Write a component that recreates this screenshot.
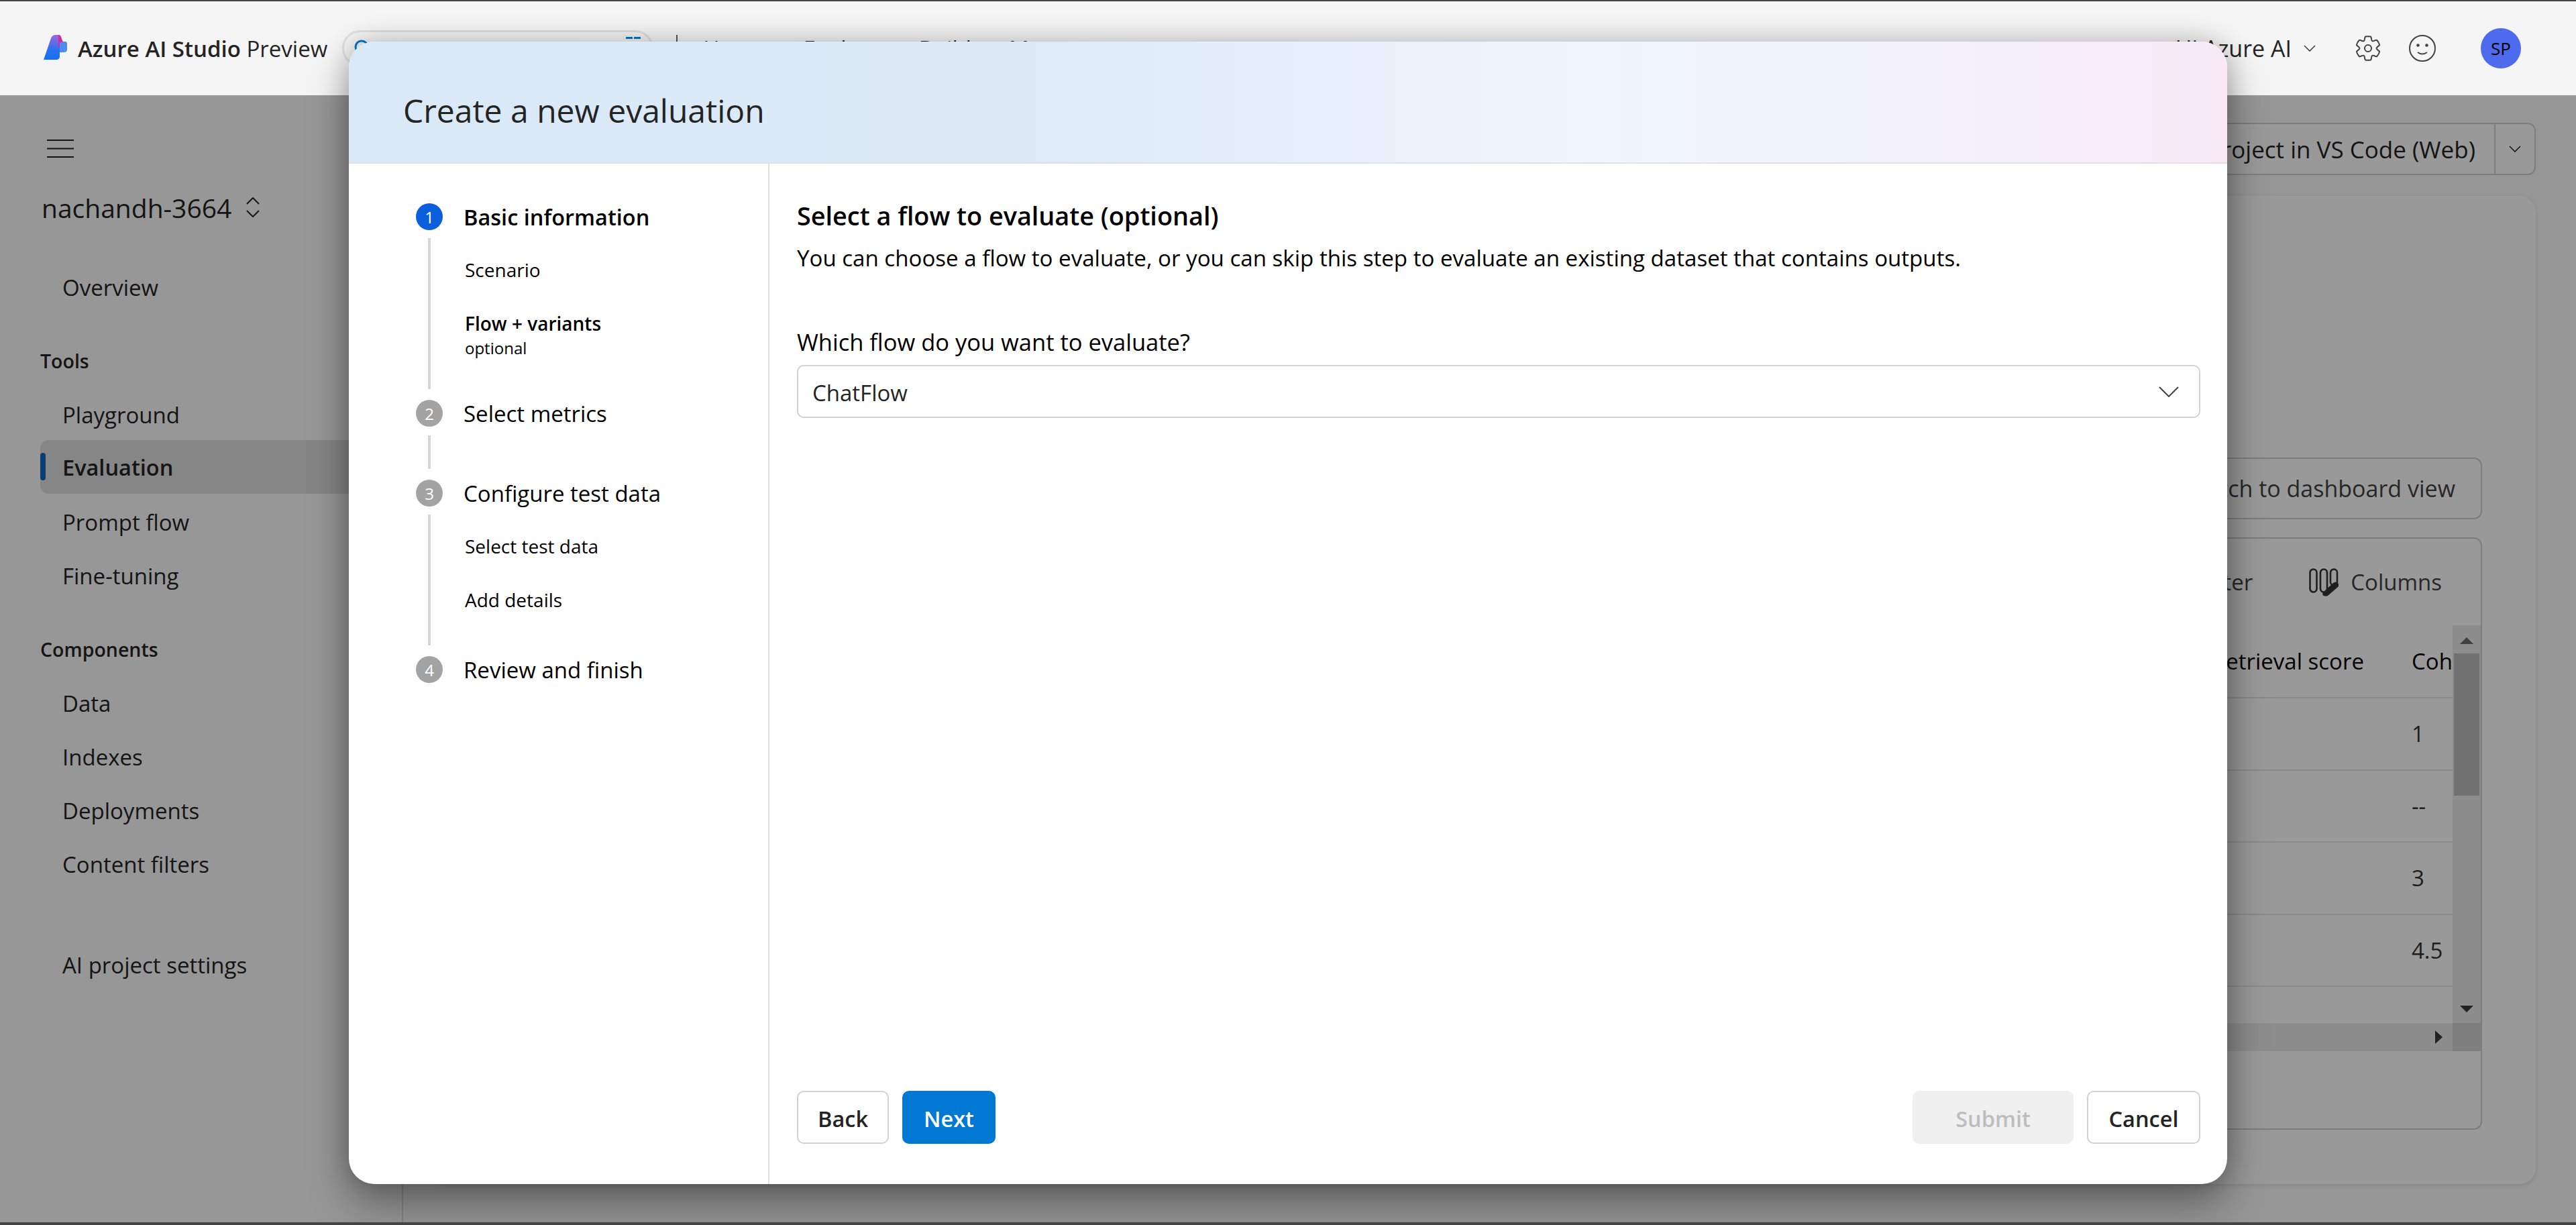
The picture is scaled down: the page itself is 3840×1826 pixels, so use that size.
<div class="page">
  <header class="topbar">
    <svg class="logo" viewBox="0 0 35 38" width="35" height="38">
      <defs><linearGradient id="lg" x1="0" y1="0" x2="0" y2="1"><stop offset="0" stop-color="#9a6ad8"/><stop offset=".6" stop-color="#2a70ee"/><stop offset="1" stop-color="#1470f5"/></linearGradient></defs>
      <path d="M24 10h8q3 0 3 3v9q0 4-5 4h-6z" fill="#4d8df2"/>
      <path d="M0 37 11 5q2-5 7-5h6v33q-1 4-5 4z" fill="url(#lg)"/>
      <path d="M22 0q3 0 4 3l3 8h-5v7h-2z" fill="#d42a9f"/>
    </svg>
    <div class="brand"><strong>Azure AI Studio</strong> <span>Preview</span></div>
    <div class="search">
      <svg width="28" height="28" viewBox="0 0 28 28"><circle cx="14" cy="12" r="9" fill="none" stroke="#0078d4" stroke-width="3"/></svg>
      <svg class="kbd" width="22" height="4" viewBox="0 0 22 4"><rect width="10" height="3" fill="#0078d4"/><rect x="12" width="10" height="3" fill="#0078d4"/></svg>
    </div>
    <div class="vline"></div>
    <nav class="toplinks"><span>Home</span><span>Explore</span><span>Build</span><span>Manage</span></nav>
    <div class="right">
      <span class="hi">Hi Azure AI</span>
      <svg class="chev" width="18" height="10" viewBox="0 0 18 10"><path d="M1 1l8 8 8-8" fill="none" stroke="#424242" stroke-width="1.6"/></svg>
      <svg class="gear" width="42" height="42" viewBox="0 0 20 20"><path d="M1.91 7.38A8.5 8.5 0 0 1 3.7 4.3a.5.5 0 0 1 .54-.13l1.92.68a1 1 0 0 0 1.32-.76l.36-2a.5.5 0 0 1 .4-.4 8.53 8.53 0 0 1 3.55 0c.2.04.35.2.38.4l.37 2a1 1 0 0 0 1.32.76l1.92-.68a.5.5 0 0 1 .54.13 8.5 8.5 0 0 1 1.78 3.08c.06.2 0 .4-.15.54l-1.56 1.32a1 1 0 0 0 0 1.52l1.56 1.32a.5.5 0 0 1 .15.54 8.5 8.5 0 0 1-1.78 3.08.5.5 0 0 1-.54.13l-1.92-.68a1 1 0 0 0-1.32.76l-.37 2a.5.5 0 0 1-.38.4 8.53 8.53 0 0 1-3.56 0 .5.5 0 0 1-.39-.4l-.36-2a1 1 0 0 0-1.32-.76l-1.92.68a.5.5 0 0 1-.54-.13 8.5 8.5 0 0 1-1.78-3.08.5.5 0 0 1 .15-.54l1.56-1.32a1 1 0 0 0 0-1.52L2.06 7.92a.5.5 0 0 1-.15-.54Z" fill="none" stroke="#424242" stroke-width=".95"/><circle cx="10" cy="10" r="2.4" fill="none" stroke="#424242" stroke-width=".95"/></svg>
      <svg class="smile" width="40" height="40" viewBox="0 0 40 40"><circle cx="20" cy="20" r="19" fill="none" stroke="#424242" stroke-width="2"/><circle cx="13.5" cy="15.5" r="2.3" fill="#424242"/><circle cx="26.5" cy="15.5" r="2.3" fill="#424242"/><path d="M13 26q7 5 14 0" fill="none" stroke="#424242" stroke-width="2"/></svg>
      <div class="avatar">SP</div>
    </div>
  </header>

  <div class="body">
    <aside class="side">
      <svg class="burger" width="40" height="27" viewBox="0 0 40 27"><path d="M0 1h40M0 13.500h40M0 26h40" stroke="#242424" stroke-width="2"/></svg>
      <div class="project">nachandh-3664
        <svg width="22" height="30" viewBox="0 0 22 30"><path d="M2 10l9-9 9 9M2 20l9 9 9-9" fill="none" stroke="#242424" stroke-width="2"/></svg>
      </div>
      <div class="item first">Overview</div>
      <div class="group">Tools</div>
      <div class="item gfirst">Playground</div>
      <div class="item active">Evaluation</div>
      <div class="item">Prompt flow</div>
      <div class="item">Fine-tuning</div>
      <div class="group g2">Components</div>
      <div class="item gfirst">Data</div>
      <div class="item">Indexes</div>
      <div class="item">Deployments</div>
      <div class="item">Content filters</div>
      <div class="item settings">AI project settings</div>
    </aside>
    <main class="main">
      <div class="actions">
        <div class="split"><span class="split-main">Open project in VS Code (Web)</span>
          <span class="split-arrow"><svg width="18" height="10" viewBox="0 0 18 10"><path d="M1 1l8 8 8-8" fill="none" stroke="#242424" stroke-width="1.6"/></svg></span>
        </div>
      </div>
      <section class="card">
        <div class="switchrow"><div class="switch">Switch to dashboard view</div></div>
        <div class="tablecard">
          <div class="toolbar">
            <span>Filter</span>
            <span class="colbtn">
              <svg width="44" height="42" viewBox="0 0 44 42"><g fill="none" stroke="#333" stroke-width="2.600"><rect x="1.500" y="1.500" width="10" height="34" rx="5"/><rect x="17" y="1.500" width="10" height="34" rx="5"/><rect x="32" y="1.500" width="10" height="24" rx="5"/></g><path d="M21 36 36 22q4-3 7 0t0 6L28 41q-3 1-6 0t-1-5z" fill="#333"/></svg>
              Columns
            </span>
          </div>
          <div class="tablewrap">
            <div class="table">
              <div class="row head"><span class="c1">Retrieval score</span><span class="c2">Coherence</span></div>
              <div class="row"><span class="c2">1</span></div>
              <div class="row"><span class="c2">--</span></div>
              <div class="row"><span class="c2">3</span></div>
              <div class="row"><span class="c2">4.5</span></div>
            </div>
            <div class="vscroll">
              <svg class="up" width="20" height="10" viewBox="0 0 20 10"><path d="M10 0l10 10H0z" fill="#6a6a6a"/></svg>
              <div class="thumb"></div>
              <svg class="down" width="20" height="10" viewBox="0 0 20 10"><path d="M10 10 20 0H0z" fill="#3a3a3a"/></svg>
            </div>
          </div>
          <div class="hscroll">
            <div class="htrack"><svg width="11" height="20" viewBox="0 0 11 20"><path d="M11 10 0 20V0z" fill="#3a3a3a"/></svg></div>
            <div class="corner"></div>
          </div>
        </div>
      </section>
    </main>
  </div>
  <div class="overlay"></div>

  <div class="modal" role="dialog">
    <div class="mhead">Create a new evaluation</div>
    <div class="mbody">
      <div class="stepper">
        <div class="step on"><span class="num">1</span><span class="lbl">Basic information</span></div>
        <div class="conn c-a">
          <div class="sub">Scenario</div>
          <div class="sub cur">Flow + variants<small>optional</small></div>
        </div>
        <div class="step"><span class="num">2</span><span class="lbl">Select metrics</span></div>
        <div class="conn c-b"></div>
        <div class="step"><span class="num">3</span><span class="lbl">Configure test data</span></div>
        <div class="conn c-c">
          <div class="sub">Select test data</div>
          <div class="sub">Add details</div>
        </div>
        <div class="step"><span class="num">4</span><span class="lbl">Review and finish</span></div>
      </div>
      <div class="pane">
        <h2>Select a flow to evaluate (optional)</h2>
        <p>You can choose a flow to evaluate, or you can skip this step to evaluate an existing dataset that contains outputs.</p>
        <label for="flow">Which flow do you want to evaluate?</label>
        <div class="dd" id="flow"><span class="ddv">ChatFlow</span>
          <svg width="30" height="16" viewBox="0 0 30 16"><path d="M1 1l14 14L29 1" fill="none" stroke="#424242" stroke-width="2"/></svg>
        </div>
        <div class="foot">
          <button class="btn back">Back</button>
          <button class="btn next">Next</button>
          <span class="sp"></span>
          <button class="btn submit">Submit</button>
          <button class="btn cancel">Cancel</button>
        </div>
      </div>
    </div>
  </div>
</div>

<style>
  :global(body){margin:0;background:#fafafa}
  .page{position:relative;width:3840px;height:1826px;overflow:hidden;display:flex;flex-direction:column;border-top:2px solid #444;border-bottom:4px solid #444;box-sizing:border-box;font-family:"Open Sans",sans-serif;font-size:33px;color:#242424}
  .topbar{height:140px;flex:none;background:#f5f5f5;display:flex;align-items:center;padding-left:65px;box-sizing:border-box}
  .logo{flex:none;margin-top:-2px}
  .brand{margin-left:16px;white-space:nowrap}
  .brand strong{font-weight:600}
  .search{width:464px;height:54px;box-sizing:border-box;border:3px solid #e0e0e0;border-radius:27px;margin-left:22px;display:flex;align-items:center;justify-content:space-between;padding:0 16px 0 12px;flex:none}
  .kbd{margin-top:-30px}
  .vline{width:2px;height:40px;background:#555;margin-left:34px}
  .toplinks{display:flex;gap:56px;margin-left:38px}
  .right{margin-left:auto;display:flex;align-items:center;padding-right:82px}
  .hi{white-space:nowrap;font-size:34px}
  .chev{margin-left:18px}
  .gear{margin-left:57px}
  .smile{margin-left:40px}
  .avatar{width:60px;height:60px;border-radius:50%;background:#4f6bed;color:#000;font-size:26px;display:flex;align-items:center;justify-content:center;margin-left:67px}
  .body{flex:1;display:flex;min-height:0;background:#fafafa}
  .side{width:601px;flex:none;box-sizing:border-box;border-right:2px solid #ddd;background:#fcfcfc;padding-left:60px;display:flex;flex-direction:column}
  .burger{margin:66px 0 0 10px}
  .project{margin:50px 0 0 2px;height:48px;display:flex;align-items:center;gap:21px;font-weight:500;font-size:39px}
  .item{height:80px;display:flex;align-items:center;padding-left:33px}
  .item.first{margin-top:55px}
  .group{height:40px;display:flex;align-items:center;font-size:28.5px;font-weight:600;margin-top:50px}
  .item.gfirst{margin-top:20px}
  .group.g2{margin-top:50px}
  .active{font-weight:600;font-size:32.5px;background:#e0e0e0;border-radius:12px;margin-right:21px;position:relative;margin-top:-2px;margin-bottom:2px}
  .active::before{content:"";position:absolute;left:0;top:19px;width:8px;height:41px;border-radius:4px;background:#0f6cbd}
  .settings{margin-top:70px}
  .main{flex:1;min-width:0;padding:41px 60px 57px 40px;display:flex;flex-direction:column;gap:31px}
  .actions{display:flex;justify-content:flex-end}
  .split{height:78px;width:720px;flex:none;box-sizing:border-box;border:2px solid #d1d1d1;border-radius:12px;background:#fff;display:flex;align-items:center;justify-content:flex-end;white-space:nowrap}
  .split-main{padding-right:28px;font-weight:500;font-size:35px}
  .split-arrow{width:58px;height:100%;border-left:2px solid #d1d1d1;display:flex;align-items:center;justify-content:center}
  .card{flex:1;background:#fff;border-radius:24px;padding:390px 80px 81px 40px;display:flex;flex-direction:column;gap:27px;min-height:0;box-shadow:0 2px 6px rgba(0,0,0,.12)}
  .switchrow{display:flex;justify-content:flex-end}
  .switch{height:92px;box-sizing:border-box;border:2px solid #d1d1d1;border-radius:12px;padding:0 38px;display:flex;align-items:center;white-space:nowrap;color:#424242;font-size:34px}
  .tablecard{flex:1;border:2px solid #d1d1d1;border-radius:12px;overflow:hidden;min-height:0}
  .toolbar{height:129px;display:flex;justify-content:flex-end;align-items:center;gap:84px;padding-right:58px;color:#424242}
  .colbtn{display:flex;align-items:center;gap:18px}
  .tablewrap{display:flex;height:593px}
  .table{flex:1;min-width:0;overflow:hidden}
  .row{height:107.5px;border-bottom:2px solid #e6e6e6;display:flex;justify-content:flex-end;align-items:center;white-space:nowrap;gap:71px;color:#333;box-sizing:border-box}
  .row.head{height:109px;color:#000}
  .c2{width:61px;overflow:hidden;flex:none}
  .vscroll{width:42px;flex:none;background:#ebebeb;display:flex;flex-direction:column;align-items:center;position:relative}
  .up{margin-top:18px}
  .thumb{width:38px;height:212px;background:#bdbdbd;margin-top:14px}
  .down{position:absolute;bottom:16px}
  .hscroll{height:42px;display:flex;background:#ebebeb}
  .htrack{flex:1;display:flex;justify-content:flex-end;align-items:center;padding-right:15px}
  .corner{width:42px;background:#d4d4d4}
  .overlay{position:absolute;left:0;right:0;top:140px;bottom:0;background:rgba(0,0,0,.4)}
  .modal{position:absolute;left:520px;top:60px;width:2800px;height:1703px;background:#fff;border-radius:38px;box-shadow:0 32px 64px rgba(0,0,0,.32),0 0 40px rgba(0,0,0,.22);display:flex;flex-direction:column;overflow:hidden}
  .mhead{flex:none;border-bottom:2px solid #e0e0e0;background:linear-gradient(90deg,#d9e9f7 0%,#dceaf8 36%,#f0f6fd 66%,#f4f1fa 86%,#f8e9f5 100%);display:flex;align-items:center;padding:24px 0 0 81px;height:156px;font-size:48px;font-weight:500}
  .mbody{flex:1;display:flex;min-height:0}
  .stepper{width:627px;flex:none;box-sizing:border-box;border-right:2px solid #e0e0e0;padding:59px 0 0 100px;color:#000}
  .step{display:flex;align-items:center;height:40px;gap:31px}
  .num{width:40px;height:40px;flex:none;border-radius:50%;background:#a3a3a3;color:#fff;font-size:24px;display:flex;align-items:center;justify-content:center}
  .on .num{background:#0b5fdd}
  .on .lbl{font-weight:600;font-size:32.5px}
  .conn{margin:12px 0 16px 18px;border-left:4px solid #d6d6d6;padding:7px 0 0 51px;box-sizing:border-box;font-size:28px}
  .c-a{height:225px}
  .c-b{height:50px;margin-top:13px}
  .c-c{height:195px}
  .sub{padding:20px 0;line-height:40px}
  .cur{font-weight:600}
  .cur small{display:block;font-size:24px;line-height:34px;font-weight:400}
  .pane{flex:1;min-width:0;padding:54px 40px 60px 41px;display:flex;flex-direction:column;color:#000}
  h2{margin:0;font-size:37.800px;line-height:48px;font-weight:600}
  p{margin:17px 0 0;line-height:44px;white-space:nowrap;font-size:33.100px}
  label{display:block;margin-top:81px;line-height:44px;font-weight:500;font-size:34.500px}
  .dd{margin-top:12px;height:79px;box-sizing:border-box;border:2px solid #d1d1d1;border-radius:10px;display:flex;align-items:center;justify-content:space-between;padding:0 30px 0 21px;color:#242424;font-size:33px}
  .ddv{margin-top:3px}
  .foot{margin-top:auto;display:flex;gap:20px}
  .sp{flex:1}
  .btn{height:79px;font:600 32.500px "Open Sans",sans-serif;border-radius:10px;border:2px solid #d1d1d1;background:#fff;color:#242424;padding:3px 0 0;box-sizing:border-box}
  .back{width:137px}
  .next{width:139px;background:#0078d4;border-color:#0078d4;color:#fff}
  .submit{width:240px;background:#f0f0f0;border-color:#f0f0f0;color:#bdbdbd}
  .cancel{width:169px}
</style>
